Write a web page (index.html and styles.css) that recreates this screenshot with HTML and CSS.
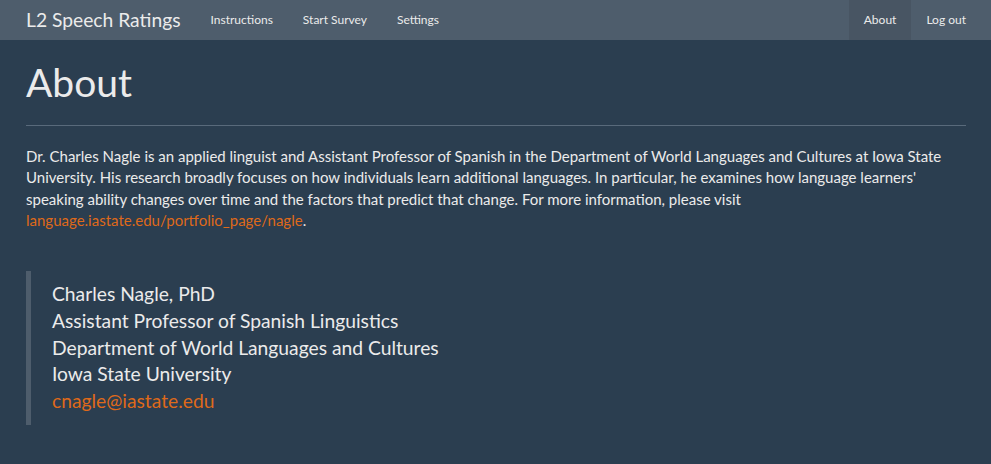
FILE: index.html
```html
<!DOCTYPE html>
<html lang="en">
<head>
<meta charset="utf-8">
<title>About - L2 Speech Ratings</title>
<link rel="stylesheet" href="styles.css">
</head>
<body>
<nav class="navbar">
  <div class="navbar-inner">
    <a class="brand" href="#">L2 Speech Ratings</a>
    <ul class="nav">
      <li><a href="#">Instructions</a></li>
      <li><a href="#">Start Survey</a></li>
      <li><a href="#">Settings</a></li>
    </ul>
    <ul class="nav nav-right">
      <li class="active"><a href="#">About</a></li>
      <li><a href="#">Log out</a></li>
    </ul>
  </div>
</nav>
<main class="container">
  <h1 class="title">About</h1>
  <hr class="rule">
  <p class="lead-text">Dr. Charles Nagle is an applied linguist and Assistant Professor of Spanish in the Department of World Languages and Cultures at Iowa State University. His research broadly focuses on how individuals learn additional languages. In particular, he examines how language learners' speaking ability changes over time and the factors that predict that change. For more information, please visit <a class="link" href="#">language.iastate.edu/portfolio_page/nagle</a>.</p>
  <blockquote class="quote">
    Charles Nagle, PhD<br>
    Assistant Professor of Spanish Linguistics<br>
    Department of World Languages and Cultures<br>
    Iowa State University<br>
    <a class="link" href="#">cnagle@iastate.edu</a>
  </blockquote>
</main>
</body>
</html>
```

FILE: styles.css
```css
html, body {
  margin: 0;
  padding: 0;
}
body {
  background: #2b3e50;
  color: #ebebeb;
  font-family: Lato, "Noto Sans", sans-serif;
  font-size: 15px;
  line-height: 1.42857;
  height: 464px;
  overflow: hidden;
}
a {
  text-decoration: none;
}
.navbar {
  background: #4e5d6c;
  height: 40px;
}
.navbar-inner {
  display: flex;
  align-items: stretch;
  height: 40px;
  padding: 0 10px 0 11px;
}
.brand {
  color: #ebebeb;
  font-size: 19.25px;
  line-height: 40px;
  padding: 0 15px;
}
.nav {
  list-style: none;
  margin: 0;
  padding: 0;
  display: flex;
}
.nav a {
  display: block;
  color: #ebebeb;
  font-size: 12px;
  line-height: 40px;
  padding: 0 15px;
}
.nav-right {
  margin-left: auto;
}
.nav .active a {
  background: #485563;
}
.container {
  padding: 0 25px 0 26px;
}
.title {
  font-size: 39px;
  font-weight: 400;
  line-height: 1.1;
  margin: 21px 0 0;
}
.rule {
  border: 0;
  border-top: 1px solid #596a7b;
  margin: 21px 0 20px;
}
.lead-text {
  margin: 0 0 39px;
}
.link {
  color: #df691a;
}
.quote {
  margin: 0;
  border-left: 5px solid #4e5d6c;
  padding: 10.5px 21px;
  font-size: 19.25px;
  line-height: 26.75px;
}
```
